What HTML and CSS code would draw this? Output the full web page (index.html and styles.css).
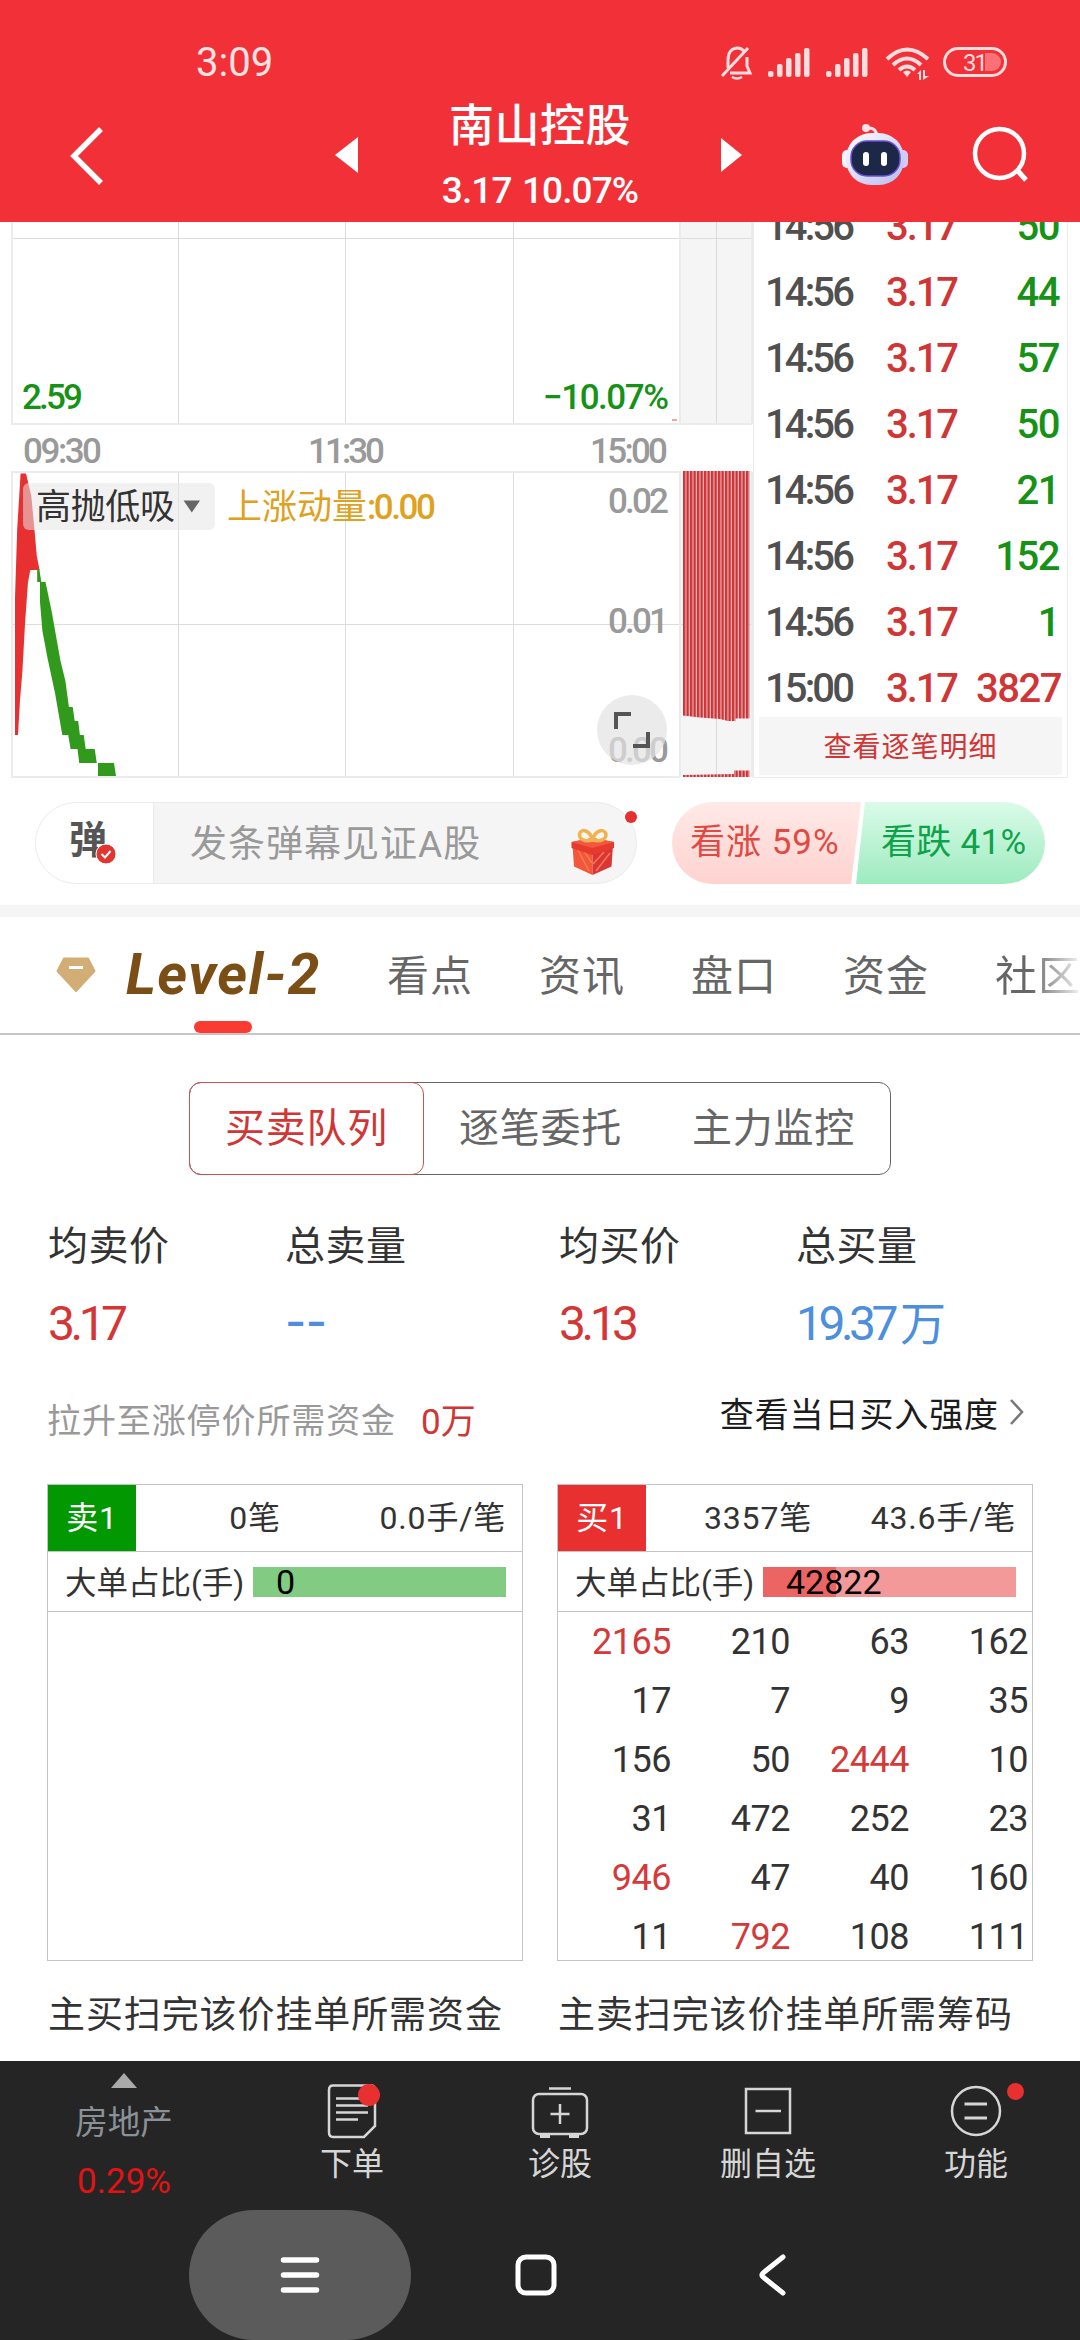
FILE: index.html
```
<!DOCTYPE html>
<html lang="zh-CN">
<head>
  <meta charset="UTF-8">
  <meta name="viewport" content="width=device-width, initial-scale=1.0">
  <title>南山控股</title>
  <link rel="stylesheet" href="styles.css">
</head>
<body>
  <header class="header">
    <div class="status-bar">
      <span class="clock">3:09</span>
      <svg class="status-icons" width="290" height="40" viewBox="720 42 290 40">
        <g fill="none" stroke="#ffdcde" stroke-width="3">
          <path d="M728 68 V60 C728 52 732 48 737.5 48 C740 48 742 49 744 51 M747 57 V66 L750 73 H730 M722 76 L748 48"/>
          <path d="M732 77 Q737 80 742 77" stroke-width="2.5"/>
        </g>
        <g fill="#ffdcde">
          <rect x="768" y="71" width="5.5" height="6" rx="2"/><rect x="777" y="64" width="5.5" height="13" rx="2"/><rect x="786" y="58" width="5.5" height="19" rx="2"/><rect x="795" y="53" width="5.5" height="24" rx="2"/><rect x="804" y="48" width="5.5" height="29" rx="2"/>
          <rect x="826" y="71" width="5.5" height="6" rx="2"/><rect x="835" y="64" width="5.5" height="13" rx="2"/><rect x="844" y="58" width="5.5" height="19" rx="2"/><rect x="853" y="53" width="5.5" height="24" rx="2"/><rect x="862" y="48" width="5.5" height="29" rx="2"/>
          <path d="M903 72 Q907 69 911 72 L907 77 Z"/>
          <path d="M917 74 L921 70 V80 H919 V74 Z M923 70 H925 V76 H929 L923 80 Z"/>
        </g>
        <g fill="none" stroke="#ffdcde" stroke-width="4">
          <path d="M887 59 Q907 40 928 59"/>
          <path d="M893 65 Q907 52 921 65"/>
          <path d="M899 70 Q907 63 915 70"/>
        </g>
        <rect x="944.5" y="48.5" width="61" height="27" rx="13.5" fill="none" stroke="#ffdcde" stroke-width="3"/>
        <path d="M985 53 H992 A9 9 0 0 1 992 71 H985 Z" fill="#f97077"/>
        <text x="963" y="71" class="battery-text">31</text>
      </svg>
    </div>
    <div class="title-bar">
      <svg class="back" width="44" height="66" viewBox="65 120 44 66"><path d="M101 127 L74 154 L101 181" fill="none" stroke="#fff" stroke-width="5.5"/></svg>
      <svg class="prev" width="23" height="36" viewBox="0 0 23 36"><path d="M0 18 L23 0 V36 Z" fill="#fff"/></svg>
      <div class="title">
        <h1>南山控股</h1>
        <p>3.17 10.07%</p>
      </div>
      <svg class="next" width="21" height="34" viewBox="0 0 21 34"><path d="M21 17 L0 0 V34 Z" fill="#fff"/></svg>
      <svg class="robot" width="66" height="62" viewBox="842 123 66 62">
        <defs>
          <linearGradient id="shell" x1="0" y1="0" x2="1" y2="1">
            <stop offset="0" stop-color="#fff"/><stop offset="1" stop-color="#b9b9f2"/>
          </linearGradient>
        </defs>
        <path d="M867 127 Q876 126 877 135" fill="none" stroke="#ffe3ea" stroke-width="3"/>
        <circle cx="866" cy="127" r="4" fill="#ffe3ea"/>
        <rect x="842" y="149" width="10" height="18" rx="5" fill="#f3f2ff"/>
        <rect x="898" y="149" width="10" height="18" rx="5" fill="#cfcdf6"/>
        <rect x="846" y="132" width="58" height="52" rx="25" fill="url(#shell)"/>
        <rect x="851" y="140" width="49" height="35" rx="16" fill="#1d2748" stroke="#6a4fd8" stroke-width="1.5"/>
        <rect x="863" y="151" width="6" height="14" rx="3" fill="#fff"/>
        <rect x="881" y="151" width="6" height="14" rx="3" fill="#fff"/>
      </svg>
      <svg class="search" width="60" height="60" viewBox="971 126 60 60"><circle cx="999.500" cy="154.500" r="24.500" fill="none" stroke="#fff" stroke-width="4.500"/><path d="M1017 171 L1026 181" stroke="#fff" stroke-width="5"/></svg>
    </div>
  </header>

  <section class="market">
    <svg class="chart" width="753" height="556" viewBox="0 222 753 556">
      <defs>
        <pattern id="bars" x="683" y="0" width="3.5" height="10" patternUnits="userSpaceOnUse">
          <rect width="3.5" height="10" fill="#f3b4b4"/><rect width="2.3" height="10" fill="#c93438"/>
        </pattern>
      </defs>
      <rect x="681" y="222" width="71" height="202" fill="#f5f5f5"/>
      <rect x="681" y="471" width="71" height="306" fill="#f5f5f5"/>
      <g stroke="#dcdcdc" stroke-width="1">
        <path d="M12 238.500 H752 M12 624.500 H752"/>
        <path d="M178.500 222 V424 M345.500 222 V424 M513.500 222 V424 M716.500 222 V424"/>
        <path d="M178.500 471 V777 M345.500 471 V777 M513.500 471 V777 M716.500 471 V777"/>
      </g>
      <g stroke="#ebebeb" stroke-width="2" fill="none">
        <path d="M12 222 V424 H752 M680 222 V424 M752 222 V424"/>
        <path d="M12 777 V472 H680 V777 M11 777 H680 M752 472 V777"/>
      </g>
      <path d="M672 420 H677" stroke="#efa5a5" stroke-width="2"/>
      <path d="M683 471 H749.500 V718.500 H735.500 V721 L728 721 L720 719 L700 717.500 L683 715.500 Z" fill="url(#bars)"/>
      <path d="M683 777 V775 L734 774 V770.500 H749.500 V777 Z" fill="url(#bars)"/>
      <path d="M20.600 473.500 H26 L31.300 496 L34.400 529 L36.800 556 L39.600 570 H30.300 L27.900 583 L25 624 L22.400 671 L20 700 L18 735 H15 V598 L17.200 529 Z" fill="#e93030"/>
      <path d="M37.200 569 H39.300 L41.300 582 H45.500 L51.600 611 L60.300 660 L65.400 681 L68.900 707 H72.700 L74.700 721 H78.200 L79.900 735 H83.700 L85.700 749 H94.700 L96.800 763 H114 L116 776 H98 V763 H79.200 L77.500 749 H70.600 L68.200 735 H62.300 L55 693 L47.500 658 L42.400 631 L40 602 V582 H37.200 Z" fill="#319a1d"/>
      <rect x="23" y="483" width="192" height="47" rx="6" fill="#e6e6e6" fill-opacity="0.55"/>
      <text x="36" y="519" class="cn dark" textLength="139">高抛低吸</text>
      <path d="M183.500 500.500 H200 L191.800 512.500 Z" fill="#666"/>
      <text x="227" y="519" class="cn gold">上涨动量</text>
      <text x="367" y="519" class="num gold" textLength="69">:0.00</text>
      <text x="22" y="409" class="num green" textLength="61">2.59</text>
      <text x="543" y="409" class="num green" textLength="126">−10.07%</text>
      <text x="23" y="462.500" class="num gray" textLength="79">09:30</text>
      <text x="308" y="462.500" class="num gray" textLength="77">11:30</text>
      <text x="590" y="462.500" class="num gray" textLength="78">15:00</text>
      <text x="608" y="513" class="num gray" textLength="61">0.02</text>
      <text x="608" y="633" class="num gray" textLength="61">0.01</text>
      <text x="608" y="762" class="num gray" textLength="61">0.00</text>
      <circle cx="632" cy="730" r="35" fill="#e3e3e3" fill-opacity="0.7"/>
      <path d="M631 714 H616 V729 M648 732 V746 H633" fill="none" stroke="#555" stroke-width="4"/>
    </svg>

    <div class="ticks">
      <ul>
        <li><span class="time">14:56</span><span class="price">3.17</span><span class="sell">50</span></li>
        <li><span class="time">14:56</span><span class="price">3.17</span><span class="sell">44</span></li>
        <li><span class="time">14:56</span><span class="price">3.17</span><span class="sell">57</span></li>
        <li><span class="time">14:56</span><span class="price">3.17</span><span class="sell">50</span></li>
        <li><span class="time">14:56</span><span class="price">3.17</span><span class="sell">21</span></li>
        <li><span class="time">14:56</span><span class="price">3.17</span><span class="sell">152</span></li>
        <li><span class="time">14:56</span><span class="price">3.17</span><span class="sell">1</span></li>
        <li><span class="time">15:00</span><span class="price">3.17</span><span class="buy">3827</span></li>
      </ul>
      <button class="more">查看逐笔明细</button>
    </div>
  </section>

  <section class="danmu">
    <div class="danmu-input">
      <div class="danmu-switch">弹
        <svg class="check" width="22" height="22" viewBox="0 0 22 22"><circle cx="11" cy="11" r="10" fill="#e33430" stroke="#fff" stroke-width="1"/><path d="M6.500 11 L10 14.500 L15.500 8" fill="none" stroke="#fff" stroke-width="2"/></svg>
      </div>
      <span class="placeholder">发条弹幕见证A股</span>
      <svg class="gift" width="46" height="50" viewBox="569 827 46 50">
        <path d="M571.500 845 L591.500 854 V875 L573 866.500 Z" fill="#f2573c"/>
        <path d="M612 845 L591.500 854 V875 L610.500 866.500 Z" fill="#dd3438"/>
        <path d="M577 850 L588 871 M583 851 L591 863 M609 853 L595 871 M603 852 L592 864" stroke="#f77c4e" stroke-width="1.500"/>
        <path d="M570.500 842 L591.500 838 L613 842 V848 L591.500 855 L570.500 848 Z" fill="#e63a2c"/>
        <path d="M570.500 842 L591.500 838 L613 842 L591.500 848 Z" fill="#f4573f"/>
        <path d="M591.500 840 C583 842 578 839 578.500 834 C580 828 589 830 591.500 840 C594 830 603 828 605 834 C605.500 839 600 842 591.500 840 Z" fill="none" stroke="#f0b352" stroke-width="3.500"/>
      </svg>
      <i class="dot"></i>
    </div>
    <div class="vote">
      <div class="vote-up">看涨 59%</div>
      <div class="vote-down">看跌 41%</div>
    </div>
  </section>

  <nav class="tabs">
    <svg class="gem" width="40" height="36" viewBox="56 957 40 36"><path d="M64 958.500 H88 L94.500 971 L76 991 L57.500 971 Z" fill="#d2ad75" stroke="#d2ad75" stroke-width="2" stroke-linejoin="round"/><path d="M69 967.500 H83" stroke="#fff" stroke-width="3"/></svg>
    <span class="tab level2">Level-2</span>
    <span class="tab">看点</span>
    <span class="tab">资讯</span>
    <span class="tab">盘口</span>
    <span class="tab">资金</span>
    <span class="tab last">社区</span>
  </nav>

  <main class="content">
    <div class="segment">
      <span class="active">买卖队列</span>
      <span>逐笔委托</span>
      <span>主力监控</span>
    </div>

    <div class="stats">
      <div><label>均卖价</label><strong class="red">3.17</strong></div>
      <div><label>总卖量</label><strong class="blue dash">--</strong></div>
      <div><label>均买价</label><strong class="red">3.13</strong></div>
      <div><label>总买量</label><strong class="blue">19.37<small>万</small></strong></div>
    </div>

    <div class="need">
      <span class="need-label">拉升至涨停价所需资金</span>
      <span class="need-value">0万</span>
      <a class="strength">查看当日买入强度
        <svg width="16" height="28" viewBox="0 0 16 28"><path d="M2 2 L13 14 L2 26" fill="none" stroke="#777" stroke-width="2.500"/></svg>
      </a>
    </div>

    <div class="queues">
      <div class="queue sell-queue">
        <div class="queue-box">
          <div class="queue-head"><b>卖1</b><span>0笔</span><em>0.0手/笔</em></div>
          <div class="ratio"><span>大单占比(手)</span><div class="bar">0</div></div>
        </div>
        <p>主买扫完该价挂单所需资金</p>
      </div>
      <div class="queue buy-queue">
        <div class="queue-box">
          <div class="queue-head"><b>买1</b><span>3357笔</span><em>43.6手/笔</em></div>
          <div class="ratio"><span>大单占比(手)</span><div class="bar">42822</div></div>
          <div class="orders">
            <span class="big">2165</span><span>210</span><span>63</span><span>162</span>
            <span>17</span><span>7</span><span>9</span><span>35</span>
            <span>156</span><span>50</span><span class="big">2444</span><span>10</span>
            <span>31</span><span>472</span><span>252</span><span>23</span>
            <span class="big">946</span><span>47</span><span>40</span><span>160</span>
            <span>11</span><span class="big">792</span><span>108</span><span>111</span>
          </div>
        </div>
        <p>主卖扫完该价挂单所需筹码</p>
      </div>
    </div>
  </main>

  <footer class="footer">
    <div class="toolbar">
      <div class="sector">
        <svg width="26" height="15" viewBox="0 0 26 15"><path d="M13 0 L26 15 H0 Z" fill="#aaa"/></svg>
        <span>房地产</span>
        <strong>0.29%</strong>
      </div>
      <div class="tool">
        <svg width="60" height="60" viewBox="322 2081 60 60"><path d="M333 2085.500 H371 Q375 2085.500 375 2090 V2126 L364 2137 H333 Q329 2137 329 2132 V2090 Q329 2085.500 333 2085.500 Z M336 2098.500 H360 M336 2105.500 H368 M336 2112.500 H368 M336 2119.500 H358" fill="none" stroke="#d6d6d6" stroke-width="2.500"/><circle cx="369" cy="2095" r="11" fill="#e93030"/></svg>
        <span>下单</span>
      </div>
      <div class="tool">
        <svg width="60" height="60" viewBox="530 2081 60 60"><g fill="none" stroke="#d6d6d6" stroke-width="2.500"><rect x="533" y="2094" width="54" height="40" rx="6"/><path d="M549 2088.500 H571 M550.500 2114 H569.500 M560 2104 V2124"/><path d="M540 2136 H550 M569 2136 H579" stroke-width="4"/></g></svg>
        <span>诊股</span>
      </div>
      <div class="tool">
        <svg width="60" height="60" viewBox="738 2081 60 60"><path d="M746 2089 H790 V2133 H746 Z M755.500 2111 H781" fill="none" stroke="#d6d6d6" stroke-width="2.500"/></svg>
        <span>删自选</span>
      </div>
      <div class="tool">
        <svg width="60" height="60" viewBox="946 2081 60 60"><circle cx="976" cy="2111" r="24" fill="none" stroke="#d6d6d6" stroke-width="2.500"/><path d="M964.500 2104 H987 M964.500 2118 H987" stroke="#d6d6d6" stroke-width="2.800"/></svg>
        <i class="tool-dot"></i>
        <span>功能</span>
      </div>
    </div>
    <div class="system-nav">
      <div class="menu-key">
        <svg width="40" height="40" viewBox="0 0 40 40"><path d="M3.500 5 H36.500 M3.500 20 H36.500 M3.500 35 H36.500" stroke="#fff" stroke-width="5.500" stroke-linecap="round"/></svg>
      </div>
      <svg class="home-key" width="42" height="42" viewBox="0 0 42 42"><rect x="3" y="3" width="36" height="36" rx="8" fill="none" stroke="#fff" stroke-width="5"/></svg>
      <svg class="back-key" width="32" height="44" viewBox="0 0 32 44"><path d="M26 4 L6 20 Q4 22 6 24 L26 40" fill="none" stroke="#fff" stroke-width="5" stroke-linecap="round"/></svg>
    </div>
  </footer>
</body>
</html>
```

FILE: styles.css
```
* {
  box-sizing: border-box;
}
body {
  margin: 0;
  width: 1080px;
  height: 2340px;
  overflow: hidden;
  background-color: #fff;
  color: #333;
  font-family: Roboto, "Noto Sans CJK SC", sans-serif;
  display: flex;
  flex-direction: column;
}
svg {
  display: block;
  flex-shrink: 0;
}
h1, p, ul {
  margin: 0;
  padding: 0;
}

/* header */
.header {
  height: 222px;
  background-color: #f23038;
  color: #fff;
}
.status-bar {
  height: 88px;
  padding: 42px 70px 0 196px;
  display: flex;
  justify-content: space-between;
}
.clock {
  font-size: 40px;
  line-height: 42px;
  color: #ffe3e4;
}
.battery-text {
  font-size: 24px;
  letter-spacing: -2px;
  fill: #ffdcde;
}
.title-bar {
  height: 134px;
  display: flex;
  align-items: center;
}
.back {
  margin-left: 65px;
}
.prev {
  margin-left: 226px;
}
.title {
  width: 240px;
  margin: 0 61px 0 62px;
  text-align: center;
}
.title h1 {
  font-size: 45px;
  line-height: 72px;
  font-weight: 500;
  letter-spacing: 0.5px;
}
.title p {
  font-size: 37px;
  line-height: 56px;
  font-weight: 500;
  letter-spacing: -0.9px;
  word-spacing: 2px;
}
.robot {
  margin-left: 100px;
}
.search {
  margin-left: 63px;
}

/* chart and tick list */
.market {
  height: 556px;
  display: flex;
}
.num {
  font-size: 35px;
  font-weight: 500;
}
.cn {
  font-size: 35px;
}
.dark {
  fill: #333;
}
.gold {
  fill: #e0a020;
}
.green {
  fill: #169216;
}
.gray {
  fill: #999;
}
.ticks {
  width: 315px;
  border: solid #ececec;
  border-width: 0 1px 1px 1px;
  padding: 0 5px;
}
.ticks ul {
  height: 495px;
  overflow: hidden;
  list-style: none;
  display: flex;
  flex-direction: column;
  justify-content: flex-end;
  padding: 0 3px 0 6px;
}
.ticks li {
  height: 66px;
  flex-shrink: 0;
  display: grid;
  grid-template-columns: 121px 90px 1fr;
  align-items: center;
  font-size: 40px;
  font-weight: 500;
  letter-spacing: -1.5px;
  position: relative;
  top: 4px;
}
.ticks .time {
  color: #505050;
  letter-spacing: -2.9px;
}
.price, .buy {
  color: #d03636;
}
.price {
  letter-spacing: -2.1px;
}
.sell {
  color: #169216;
}
.sell, .buy {
  text-align: right;
}
.more {
  display: block;
  width: 100%;
  height: 58px;
  padding: 0 0 3px;
  border: none;
  background-color: #f5f5f5;
  color: #d03636;
  font: 28px Roboto, "Noto Sans CJK SC", sans-serif;
  letter-spacing: 1px;
}

/* danmu bar */
.danmu {
  height: 139px;
  padding: 24px 35px 21px 35px;
  border-bottom: 12px solid #f5f5f5;
  display: flex;
  justify-content: space-between;
}
.danmu-input {
  width: 602px;
  height: 82px;
  border: 1px solid #ebebeb;
  border-radius: 41px;
  background-color: #f5f5f5;
  display: flex;
  align-items: center;
  position: relative;
}
.danmu-switch {
  width: 118px;
  height: 80px;
  padding-left: 33px;
  line-height: 74px;
  font-size: 38px;
  font-weight: 700;
  color: #555;
  background-color: #fff;
  border-right: 1px solid #ebebeb;
  border-radius: 40px 0 0 40px;
}
.check {
  position: absolute;
  left: 59px;
  top: 40px;
}
.placeholder {
  width: 378px;
  padding-left: 36px;
  padding-bottom: 5px;
  font-size: 37px;
  letter-spacing: 1px;
  color: #999;
}
.gift {
  margin-left: 38px;
  margin-top: 17px;
}
.dot {
  position: absolute;
  right: -1px;
  top: 8px;
  width: 12px;
  height: 12px;
  border-radius: 50%;
  background-color: #e43030;
}
.vote {
  width: 373px;
  height: 82px;
  border-radius: 41px;
  overflow: hidden;
  display: flex;
  font-size: 35px;
  letter-spacing: 1px;
  line-height: 82px;
}
.vote-up {
  width: 189px;
  padding-left: 18px;
  white-space: nowrap;
  color: #e04a42;
  background: linear-gradient(#ffe9e7, #fed3d0);
  clip-path: polygon(0 0, 100% 0, 179px 100%, 0 100%);
}
.vote-down {
  width: 189px;
  margin-left: -5px;
  padding-left: 25px;
  white-space: nowrap;
  letter-spacing: 0.3px;
  color: #0ea24a;
  background: linear-gradient(#dafbe9, #9eebbf);
  clip-path: polygon(9px 0, 100% 0, 100% 100%, 0 100%);
}

/* tabs */
.tabs {
  height: 118px;
  border-bottom: 2px solid #c6c6c6;
  padding-left: 56px;
  display: flex;
  align-items: center;
  overflow: hidden;
}
.tab {
  width: 152px;
  flex-shrink: 0;
  padding-bottom: 6px;
  font-size: 42px;
  letter-spacing: 1px;
  color: #666;
}
.level2 {
  width: 260px;
  height: 118px;
  line-height: 118px;
  padding: 0 0 0 30px;
  font-size: 57px;
  font-weight: 700;
  font-style: italic;
  letter-spacing: 1.4px;
  color: #7a4e14;
  position: relative;
}
.level2::after {
  content: "";
  position: absolute;
  left: 98px;
  bottom: 1px;
  width: 58px;
  height: 12px;
  border-radius: 6px;
  background-color: #fb3b32;
}
.tabs .level2 {
  margin-right: 31px;
}
.tab.last {
  color: transparent;
  background: linear-gradient(90deg, #666 35px, #eee 84px);
  background-clip: text;
  -webkit-background-clip: text;
}

/* level-2 content */
.content {
  flex: 1;
  padding-top: 47px;
}
.segment {
  width: 702px;
  height: 93px;
  margin: 0 auto;
  border: 1.5px solid #666;
  border-radius: 12px;
  display: flex;
}
.segment span {
  flex: 1;
  text-align: center;
  font-size: 40px;
  letter-spacing: 0.7px;
  line-height: 92px;
  color: #666;
}
.segment .active {
  margin: -1px 0 -1px -1px;
  color: #d03636;
  border: 1.5px solid #d05050;
  border-radius: 12px;
}
.stats {
  padding-left: 48px;
  margin-top: 38px;
  display: grid;
  grid-template-columns: 237px 274px 237px 1fr;
}
.stats label {
  display: block;
  font-size: 40px;
  letter-spacing: 0.5px;
  line-height: 68px;
}
.stats strong {
  display: block;
  font-size: 48px;
  font-weight: 400;
  letter-spacing: -4.5px;
  line-height: 86px;
  height: 86px;
}
.stats small {
  margin-left: 6px;
  font-size: 46px;
}
.stats .dash {
  font-family: Inter, sans-serif;
  font-size: 46px;
  font-weight: 500;
  letter-spacing: -0.5px;
  line-height: 80px;
}
.red {
  color: #d43636;
}
.blue {
  color: #4d8fdc;
}
.need {
  height: 76px;
  margin-top: 13px;
  padding: 0 55px 0 47px;
  display: flex;
  align-items: center;
}
.need-label {
  font-size: 34px;
  letter-spacing: 0.9px;
  color: #999;
}
.need-value {
  margin-left: 25px;
  font-size: 35px;
  color: #d03636;
}
.strength {
  margin-left: auto;
  margin-bottom: 12px;
  font-size: 34px;
  letter-spacing: 0.9px;
  color: #1c1c1c;
  display: flex;
  align-items: center;
  gap: 10px;
}
.queues {
  padding: 28px 47px 0 47px;
  display: flex;
  justify-content: space-between;
}
.queue {
  width: 476px;
}
.queue-box {
  height: 477px;
  border: 1px solid #c4c4c4;
  overflow: hidden;
}
.queue-head {
  height: 67px;
  border-bottom: 1px solid #c4c4c4;
  display: grid;
  grid-template-columns: 88px 238px minmax(0, 1fr);
  line-height: 66px;
  font-size: 32px;
  letter-spacing: 0.8px;
}
.buy-queue .queue-head {
  grid-template-columns: 88px 224px minmax(0, 1fr);
}
.queue-head b {
  font-weight: 400;
  color: #fff;
  text-align: center;
}
.queue-head span {
  text-align: center;
}
.queue-head em {
  font-style: normal;
  justify-self: end;
  padding-right: 16px;
  white-space: nowrap;
}
.sell-queue b {
  background-color: #019801;
}
.buy-queue b {
  background-color: #e93030;
}
.ratio {
  height: 60px;
  padding: 0 16px 0 17px;
  border-bottom: 1px solid #c4c4c4;
  display: flex;
  align-items: center;
  justify-content: space-between;
  font-size: 31.5px;
}
.ratio span {
  padding-bottom: 3px;
}
.bar {
  width: 253px;
  height: 30px;
  padding-left: 23px;
  line-height: 30px;
  font-size: 34px;
  color: #000;
  background-color: #82cb82;
}
.buy-queue .bar {
  background: linear-gradient(90deg, #ec6565 29%, #f39999 29%);
}
.orders {
  display: grid;
  grid-template-columns: repeat(4, 119px);
  margin-left: -1px;
}
.orders span {
  height: 59px;
  padding-right: 5px;
  line-height: 60px;
  text-align: right;
  font-size: 36px;
  letter-spacing: -0.5px;
}
.orders .big {
  color: #d43a3a;
}
.queue p {
  padding-left: 1px;
  font-size: 37px;
  letter-spacing: 0.9px;
  line-height: 56px;
  margin-top: 27px;
  white-space: nowrap;
}

/* bottom */
.footer {
  height: 279px;
  background-color: #252525;
  color: #d6d6d6;
}
.toolbar {
  height: 149px;
  display: grid;
  grid-template-columns: 248px repeat(4, 208px);
  font-size: 32px;
}
.sector {
  padding-top: 12px;
  display: flex;
  flex-direction: column;
  align-items: center;
}
.sector span {
  font-size: 32.5px;
  line-height: 70px;
  color: #8a9299;
}
.sector strong {
  font-size: 35px;
  font-weight: 400;
  line-height: 48px;
  color: #e01414;
}
.tool {
  padding-top: 20px;
  display: flex;
  flex-direction: column;
  align-items: center;
  position: relative;
}
.tool span {
  line-height: 47px;
}
.tool-dot {
  position: absolute;
  left: 135px;
  top: 22px;
  width: 17px;
  height: 17px;
  border-radius: 50%;
  background-color: #e93030;
}
.system-nav {
  height: 130px;
  display: flex;
  align-items: center;
}
.menu-key {
  width: 222px;
  height: 130px;
  margin-left: 189px;
  border-radius: 65px;
  background-color: #5b5b5b;
  display: flex;
  align-items: center;
  justify-content: center;
}
.home-key {
  margin-left: 104px;
}
.back-key {
  margin-left: 200px;
}
```
